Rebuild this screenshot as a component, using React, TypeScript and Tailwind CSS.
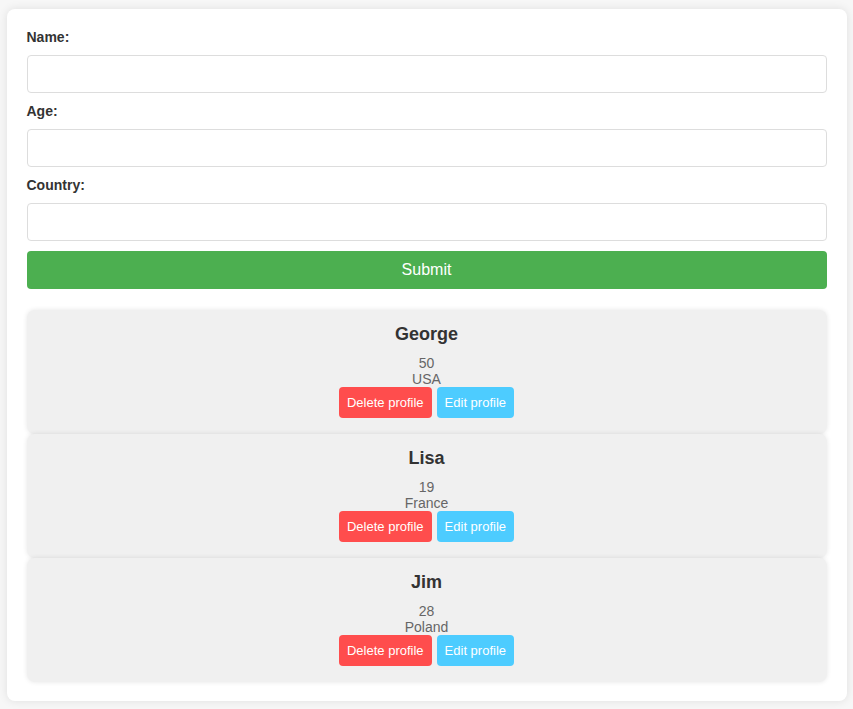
import { useState } from 'react'

type Profile = { name: string; age: number; country: string }

const initial: Profile[] = [
  { name: 'George', age: 50, country: 'USA' },
  { name: 'Lisa', age: 19, country: 'France' },
  { name: 'Jim', age: 28, country: 'Poland' },
]

export default function App() {
  const [profiles, setProfiles] = useState(initial)
  const [name, setName] = useState('')
  const [age, setAge] = useState('')
  const [country, setCountry] = useState('')

  const submit = (e: React.FormEvent) => {
    e.preventDefault()
    if (!name) return
    setProfiles([...profiles, { name, age: Number(age), country }])
    setName('')
    setAge('')
    setCountry('')
  }

  return (
    <div className="min-h-[709px] bg-[#f7f7f7] pt-[9px] pb-2 font-['Liberation_Sans',Arial,sans-serif]">
      <div className="mx-auto w-[840px] rounded-lg bg-white px-5 pt-5 pb-[19px] shadow-[0_0_10px_rgba(0,0,0,0.1)]">
        <form onSubmit={submit} className="flex flex-col">
          <label className="mb-[10px] text-sm font-bold leading-4 text-[#333]">Name:</label>
          <input
            value={name}
            onChange={(e) => setName(e.target.value)}
            className="mb-[10px] h-[38px] rounded border border-[#ddd] px-2 text-sm outline-none"
          />
          <label className="mb-[10px] text-sm font-bold leading-4 text-[#333]">Age:</label>
          <input
            value={age}
            onChange={(e) => setAge(e.target.value)}
            className="mb-[10px] h-[38px] rounded border border-[#ddd] px-2 text-sm outline-none"
          />
          <label className="mb-[10px] text-sm font-bold leading-4 text-[#333]">Country:</label>
          <input
            value={country}
            onChange={(e) => setCountry(e.target.value)}
            className="mb-[10px] h-[38px] rounded border border-[#ddd] px-2 text-sm outline-none"
          />
          <button type="submit" className="h-[38px] rounded bg-[#4caf50] text-base text-white">
            Submit
          </button>
        </form>

        <div className="mt-[21px] flex flex-col">
          {profiles.map((p, i) => (
            <div
              key={i}
              className="flex flex-col items-center rounded-lg bg-[#f0f0f0] pt-[14px] pb-[16px] shadow-[0_0_5px_rgba(0,0,0,0.1)]"
            >
              <h3 className="mb-[10px] text-lg font-bold leading-[21px] text-[#333]">{p.name}</h3>
              <p className="text-sm leading-4 text-[#666]">{p.age}</p>
              <p className="text-sm leading-4 text-[#666]">{p.country}</p>
              <div className="flex gap-[5px]">
                <button
                  onClick={() => setProfiles(profiles.filter((_, j) => j !== i))}
                  className="h-[31px] rounded bg-[#ff4d4d] px-2 text-[13px] text-white"
                >
                  Delete profile
                </button>
                <button className="h-[31px] rounded bg-[#4dccff] px-2 text-[13px] text-white">
                  Edit profile
                </button>
              </div>
            </div>
          ))}
        </div>
      </div>
    </div>
  )
}
